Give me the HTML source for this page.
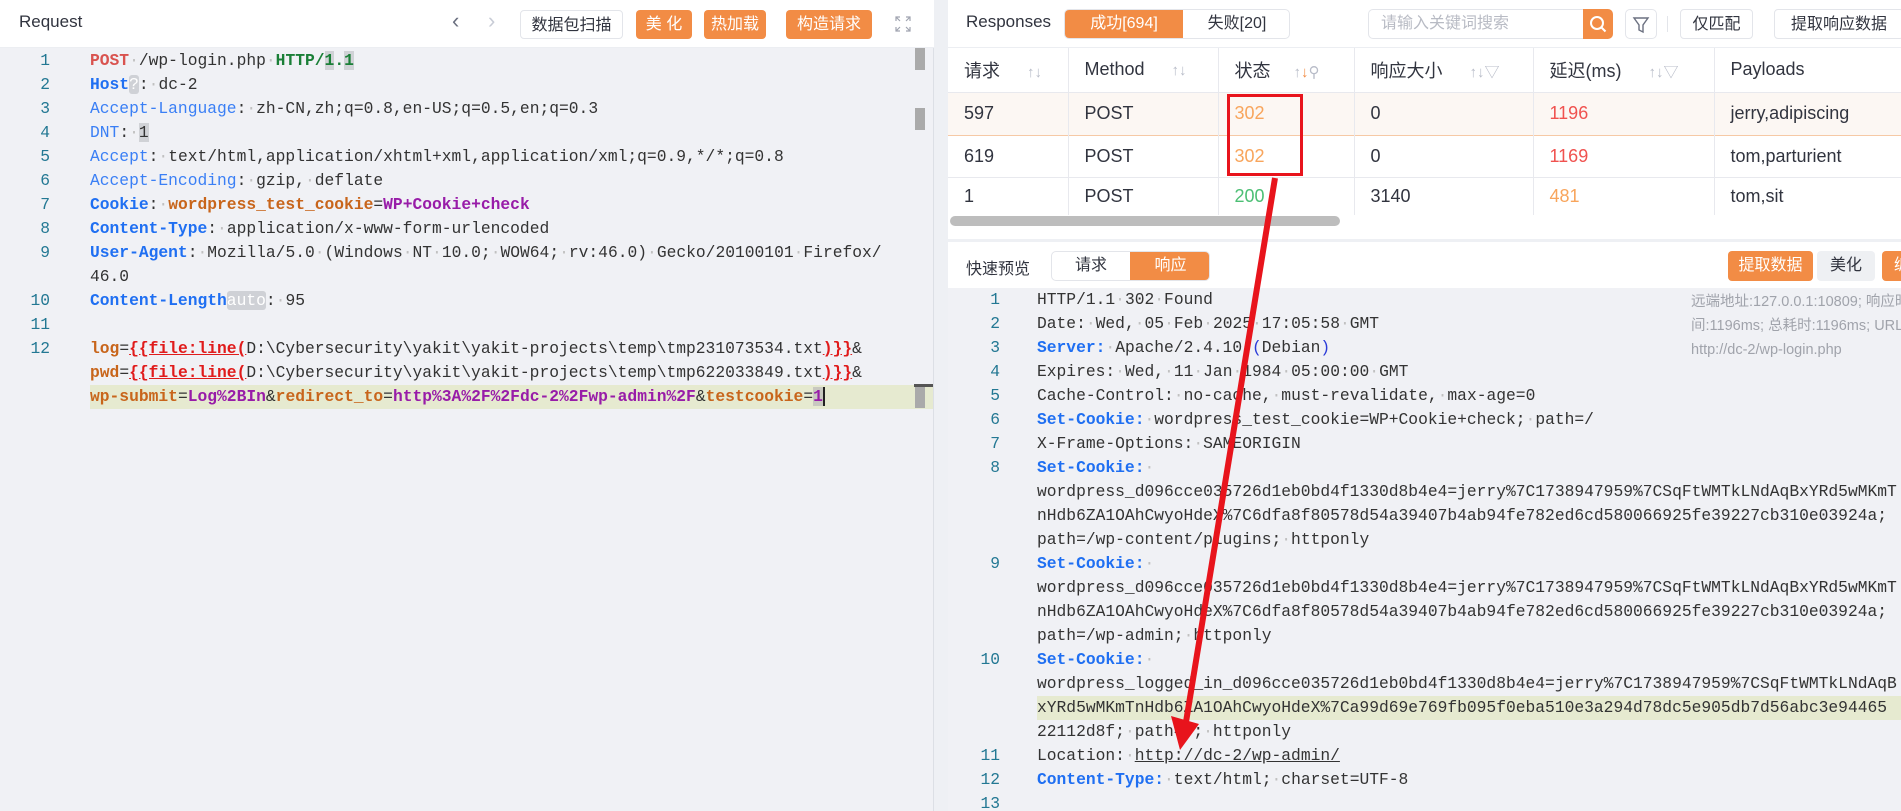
<!DOCTYPE html>
<html><head><meta charset="utf-8"><style>
*{box-sizing:border-box;margin:0;padding:0}
body{width:1901px;height:811px;overflow:hidden;background:#eef0f4;font-family:"Liberation Sans","Noto Sans CJK SC",sans-serif;color:#31343f;position:relative}
.abs{position:absolute}
.btn{position:absolute;height:29px;border-radius:4px;font-size:16px;line-height:29px;text-align:center}
.or{background:#f28c45;color:#fff}
.wb{background:#fff;border:1px solid #e3e5ea;color:#31343f}
.code{font-family:"Liberation Mono","Noto Sans CJK SC",monospace;font-size:16.3px;color:#333}
.code span,.code b{white-space:pre}
.row{height:24px;line-height:24px;position:relative;overflow:visible}
.ln{position:absolute;text-align:right;color:#237893}
.d{color:#c0c0c0}
.kb{color:#1f6ff2;font-weight:bold}
.k{color:#3a7ff5}
.ck{color:#c8651b}
.cv{color:#981ca8}
.rd{color:#e01b1b}
.u{text-decoration:underline;text-decoration-color:#e01b1b}
table{border-collapse:collapse}
th,td{border-right:1px solid #e8e9ee;text-align:left;padding-left:16px;font-size:18px;font-weight:normal}
.sort{color:#b8bcc8;font-size:15px}
</style></head><body>

<div class="abs" style="left:0;top:0;width:934px;height:811px;background:#f0f1f5"></div>
<div class="abs" style="left:0;top:0;width:934px;height:48px;background:#fff;border-bottom:1px solid #eceef2"></div>
<div class="abs" style="left:19px;top:12px;font-size:17px;color:#31343f">Request</div>
<div class="abs" style="left:452px;top:8px;font-size:22px;color:#6b7080">&#8249;</div>
<div class="abs" style="left:488px;top:8px;font-size:22px;color:#c8ccd6">&#8250;</div>
<div class="btn wb" style="left:520px;top:10px;width:103px">数据包扫描</div>
<div class="btn or" style="left:636px;top:10px;width:56px">美 化</div>
<div class="btn or" style="left:704px;top:10px;width:62px">热加载</div>
<div class="btn or" style="left:786px;top:10px;width:86px">构造请求</div>
<svg class="abs" style="left:895px;top:16px" width="16" height="16" viewBox="0 0 16 16" fill="none" stroke="#a0a4b0" stroke-width="1.2"><path d="M1 5V1h4M1 1l4 4M15 5V1h-4M15 1l-4 4M1 11v4h4M1 15l4-4M15 11v4h-4M15 15l-4-4"/></svg>

<div class="abs" style="left:90px;top:385px;width:844px;height:24px;background:#e6ead0"></div>
<div class="abs" style="left:915px;top:48px;width:10px;height:22px;background:#aaa"></div>
<div class="abs" style="left:915px;top:108px;width:10px;height:22px;background:#aaa"></div>
<div class="abs" style="left:915px;top:385px;width:10px;height:23px;background:#aaa"></div>
<div class="abs" style="left:914px;top:384px;width:20px;height:3px;background:#555"></div>
<div class="abs" style="left:933px;top:48px;width:1px;height:763px;background:#dcdfe5"></div>

<div class="abs code" style="left:0;top:49px;width:934px">
<div class="row"><span class="ln" style="left:0;width:50px">1</span><span style="position:absolute;left:90px"><b style="color:#d9534f">POST</b><span class="d">·</span>/wp-login.php<span class="d">·</span><b style="color:#1a7f37">HTTP/<span style="background:#d0d2d6">1</span>.<span style="background:#d0d2d6">1</span></b></span></div>
<div class="row"><span class="ln" style="left:0;width:50px">2</span><span style="position:absolute;left:90px"><span class="kb">Host</span><span style="background:#cfd1d6;color:#fff;border-radius:3px">?</span>:<span class="d">·</span>dc-2</span></div>
<div class="row"><span class="ln" style="left:0;width:50px">3</span><span style="position:absolute;left:90px"><span class="k">Accept-Language</span>:<span class="d">·</span>zh-CN,zh;q=0.8,en-US;q=0.5,en;q=0.3</span></div>
<div class="row"><span class="ln" style="left:0;width:50px">4</span><span style="position:absolute;left:90px"><span class="k">DNT</span>:<span class="d">·</span><span style="background:#d0d2d6">1</span></span></div>
<div class="row"><span class="ln" style="left:0;width:50px">5</span><span style="position:absolute;left:90px"><span class="k">Accept</span>:<span class="d">·</span>text/html,application/xhtml+xml,application/xml;q=0.9,*/*;q=0.8</span></div>
<div class="row"><span class="ln" style="left:0;width:50px">6</span><span style="position:absolute;left:90px"><span class="k">Accept-Encoding</span>:<span class="d">·</span>gzip,<span class="d">·</span>deflate</span></div>
<div class="row"><span class="ln" style="left:0;width:50px">7</span><span style="position:absolute;left:90px"><span class="kb">Cookie</span>:<span class="d">·</span><b class="ck">wordpress_test_cookie</b>=<b class="cv">WP+Cookie+check</b></span></div>
<div class="row"><span class="ln" style="left:0;width:50px">8</span><span style="position:absolute;left:90px"><span class="kb">Content-Type</span>:<span class="d">·</span>application/x-www-form-urlencoded</span></div>
<div class="row"><span class="ln" style="left:0;width:50px">9</span><span style="position:absolute;left:90px"><span class="kb">User-Agent</span>:<span class="d">·</span>Mozilla/5.0<span class="d">·</span>(Windows<span class="d">·</span>NT<span class="d">·</span>10.0;<span class="d">·</span>WOW64;<span class="d">·</span>rv:46.0)<span class="d">·</span>Gecko/20100101<span class="d">·</span>Firefox/</span></div>
<div class="row"><span style="position:absolute;left:90px">46.0</span></div>
<div class="row"><span class="ln" style="left:0;width:50px">10</span><span style="position:absolute;left:90px"><span class="kb">Content-Length</span><span style="background:#cfd1d6;color:#fff;border-radius:3px">auto</span>:<span class="d">·</span>95</span></div>
<div class="row"><span class="ln" style="left:0;width:50px">11</span></div>
<div class="row"><span class="ln" style="left:0;width:50px">12</span><span style="position:absolute;left:90px"><b class="ck">log</b>=<b class="rd u">{{file:line(</b>D:\Cybersecurity\yakit\yakit-projects\temp\tmp231073534.txt<b class="rd u">)}}</b>&amp;</span></div>
<div class="row"><span style="position:absolute;left:90px"><b class="ck">pwd</b>=<b class="rd u">{{file:line(</b>D:\Cybersecurity\yakit\yakit-projects\temp\tmp622033849.txt<b class="rd u">)}}</b>&amp;</span></div>
<div class="row"><span style="position:absolute;left:90px"><b class="ck">wp-submit</b>=<b class="cv">Log%2BIn</b>&amp;<b class="ck">redirect_to</b>=<b class="cv">http%3A%2F%2Fdc-2%2Fwp-admin%2F</b>&amp;<b class="ck">testcookie</b>=<b class="cv" style="background:#c8c8c0">1</b><span style="border-left:2px solid #222"></span></span></div>
</div>

<div class="abs" style="left:948px;top:0;width:953px;height:239px;background:#fff"></div>
<div class="abs" style="left:948px;top:0;width:953px;height:48px;border-bottom:1px solid #eceef2"></div>
<div class="abs" style="left:966px;top:12px;font-size:17px">Responses</div>
<div class="abs" style="left:1064px;top:9px;width:226px;height:30px;border:1px solid #e3e5ea;border-radius:5px;overflow:hidden;font-size:16px;line-height:28px">
<div class="abs or" style="left:0;top:0;width:118px;height:30px;text-align:center">成功[694]</div>
<div class="abs" style="left:118px;top:0;width:108px;text-align:center">失败[20]</div></div>
<div class="abs" style="left:1368px;top:9px;width:216px;height:30px;border:1px solid #e3e5ea;border-right:none;border-radius:5px 0 0 5px;font-size:16px;line-height:28px;color:#b8bbc4;padding-left:12px">请输入关键词搜索</div>
<div class="abs or" style="left:1583px;top:9px;width:30px;height:30px;border-radius:0 5px 5px 0"><svg width="30" height="30"><circle cx="14" cy="14" r="6" fill="none" stroke="#fff" stroke-width="2"/><path d="M18.5 18.5l4 4" stroke="#fff" stroke-width="2"/></svg></div>
<div class="abs" style="left:1625px;top:9px;width:32px;height:30px;border:1px solid #e3e5ea;border-radius:5px"><svg width="30" height="28"><path d="M8 8h14l-5 7v7l-4-2v-5z" fill="none" stroke="#6b7080" stroke-width="1.4"/></svg></div>
<div class="abs" style="left:1667px;top:16px;width:1px;height:16px;background:#e3e5ea"></div>
<div class="btn wb" style="left:1680px;top:9px;width:73px;height:30px">仅匹配</div>
<div class="btn wb" style="left:1774px;top:9px;width:130px;height:30px">提取响应数据</div>

<table class="abs" style="left:948px;top:48px;width:970px">
<tr style="height:44px;background:#fff;border-bottom:1px solid #e8e9ee">
<th style="width:120px">请求 <span class="sort" style="margin-left:22px">↑↓</span></th>
<th style="width:150px">Method <span class="sort" style="margin-left:22px">↑↓</span></th>
<th style="width:136px">状态 <span class="sort" style="margin-left:18px">↑<span style="color:#f28c45">↓</span>&#9906;</span></th>
<th style="width:179px">响应大小 <span class="sort" style="margin-left:22px">↑↓▽</span></th>
<th style="width:181px">延迟(ms) <span class="sort" style="margin-left:22px">↑↓▽</span></th>
<th>Payloads</th></tr>
<tr style="height:43px;background:#fcf7f3;border-top:1px solid #f6c9a5;border-bottom:1px solid #f6c9a5"><td>597</td><td>POST</td><td style="color:#f8a55c">302</td><td>0</td><td style="color:#f0524f">1196</td><td>jerry,adipiscing</td></tr>
<tr style="height:42px;border-bottom:1px solid #e8e9ee"><td>619</td><td>POST</td><td style="color:#f8a55c">302</td><td>0</td><td style="color:#f0524f">1169</td><td>tom,parturient</td></tr>
<tr style="height:38px"><td>1</td><td>POST</td><td style="color:#4cbf74">200</td><td>3140</td><td style="color:#f8a55c">481</td><td>tom,sit</td></tr>
</table>
<div class="abs" style="left:950px;top:216px;width:390px;height:10px;border-radius:5px;background:#bdbdbd"></div>
<div class="abs" style="left:1227px;top:94px;width:76px;height:82px;border:3px solid #e8141c"></div>

<div class="abs" style="left:948px;top:242px;width:953px;height:46px;background:#fff"></div>
<div class="abs" style="left:966px;top:255px;font-size:16px;color:#31343f">快速预览</div>
<div class="abs" style="left:1051px;top:251px;width:159px;height:30px;border:1px solid #e3e5ea;border-radius:5px;overflow:hidden;font-size:16px;line-height:28px">
<div class="abs" style="left:0;top:0;width:78px;text-align:center">请求</div>
<div class="abs or" style="left:78px;top:0;width:81px;height:30px;text-align:center">响应</div></div>
<div class="btn or" style="left:1728px;top:251px;width:85px;height:30px">提取数据</div>
<div class="btn" style="left:1817px;top:251px;width:58px;height:30px;background:#eef0f3">美化</div>
<div class="btn or" style="left:1882px;top:251px;width:40px;height:30px">编</div>

<div class="abs" style="left:948px;top:288px;width:953px;height:523px;background:#f0f1f5"></div>
<div class="abs" style="left:1037px;top:696px;width:864px;height:24px;background:#e6ead0"></div>
<div class="abs" style="left:1691px;top:290px;width:220px;font-size:14.5px;line-height:24px;color:#a0a3ab;white-space:nowrap">远端地址:127.0.0.1:10809; 响应时<br>间:1196ms; 总耗时:1196ms; URL:<br>http://dc-2/wp-login.php</div>

<div class="abs code" style="left:948px;top:288px;width:953px;overflow:hidden;height:523px">
<div class="row"><span class="ln" style="left:0;width:52px">1</span><span style="position:absolute;left:89px">HTTP/1.1<span class="d">·</span>302<span class="d">·</span>Found</span></div>
<div class="row"><span class="ln" style="left:0;width:52px">2</span><span style="position:absolute;left:89px">Date:<span class="d">·</span>Wed,<span class="d">·</span>05<span class="d">·</span>Feb<span class="d">·</span>2025<span class="d">·</span>17:05:58<span class="d">·</span>GMT</span></div>
<div class="row"><span class="ln" style="left:0;width:52px">3</span><span style="position:absolute;left:89px"><span class="kb">Server:</span><span class="d">·</span>Apache/2.4.10<span class="d">·</span><span style="color:#2a3bd8">(</span>Debian<span style="color:#2a3bd8">)</span></span></div>
<div class="row"><span class="ln" style="left:0;width:52px">4</span><span style="position:absolute;left:89px">Expires:<span class="d">·</span>Wed,<span class="d">·</span>11<span class="d">·</span>Jan<span class="d">·</span>1984<span class="d">·</span>05:00:00<span class="d">·</span>GMT</span></div>
<div class="row"><span class="ln" style="left:0;width:52px">5</span><span style="position:absolute;left:89px">Cache-Control:<span class="d">·</span>no-cache,<span class="d">·</span>must-revalidate,<span class="d">·</span>max-age=0</span></div>
<div class="row"><span class="ln" style="left:0;width:52px">6</span><span style="position:absolute;left:89px"><span class="kb">Set-Cookie:</span><span class="d">·</span>wordpress_test_cookie=WP+Cookie+check;<span class="d">·</span>path=/</span></div>
<div class="row"><span class="ln" style="left:0;width:52px">7</span><span style="position:absolute;left:89px">X-Frame-Options:<span class="d">·</span>SAMEORIGIN</span></div>
<div class="row"><span class="ln" style="left:0;width:52px">8</span><span style="position:absolute;left:89px"><span class="kb">Set-Cookie:</span><span class="d">·</span></span></div>
<div class="row"><span style="position:absolute;left:89px">wordpress_d096cce035726d1eb0bd4f1330d8b4e4=jerry%7C1738947959%7CSqFtWMTkLNdAqBxYRd5wMKmT</span></div>
<div class="row"><span style="position:absolute;left:89px">nHdb6ZA1OAhCwyoHdeX%7C6dfa8f80578d54a39407b4ab94fe782ed6cd580066925fe39227cb310e03924a;</span></div>
<div class="row"><span style="position:absolute;left:89px">path=/wp-content/plugins;<span class="d">·</span>httponly</span></div>
<div class="row"><span class="ln" style="left:0;width:52px">9</span><span style="position:absolute;left:89px"><span class="kb">Set-Cookie:</span><span class="d">·</span></span></div>
<div class="row"><span style="position:absolute;left:89px">wordpress_d096cce035726d1eb0bd4f1330d8b4e4=jerry%7C1738947959%7CSqFtWMTkLNdAqBxYRd5wMKmT</span></div>
<div class="row"><span style="position:absolute;left:89px">nHdb6ZA1OAhCwyoHdeX%7C6dfa8f80578d54a39407b4ab94fe782ed6cd580066925fe39227cb310e03924a;</span></div>
<div class="row"><span style="position:absolute;left:89px">path=/wp-admin;<span class="d">·</span>httponly</span></div>
<div class="row"><span class="ln" style="left:0;width:52px">10</span><span style="position:absolute;left:89px"><span class="kb">Set-Cookie:</span><span class="d">·</span></span></div>
<div class="row"><span style="position:absolute;left:89px">wordpress_logged_in_d096cce035726d1eb0bd4f1330d8b4e4=jerry%7C1738947959%7CSqFtWMTkLNdAqB</span></div>
<div class="row"><span style="position:absolute;left:89px">xYRd5wMKmTnHdb6ZA1OAhCwyoHdeX%7Ca99d69e769fb095f0eba510e3a294d78dc5e905db7d56abc3e94465</span></div>
<div class="row"><span style="position:absolute;left:89px">22112d8f;<span class="d">·</span>path=/;<span class="d">·</span>httponly</span></div>
<div class="row"><span class="ln" style="left:0;width:52px">11</span><span style="position:absolute;left:89px">Location:<span class="d">·</span><span style="text-decoration:underline">http://dc-2/wp-admin/</span></span></div>
<div class="row"><span class="ln" style="left:0;width:52px">12</span><span style="position:absolute;left:89px"><span class="kb">Content-Type:</span><span class="d">·</span>text/html;<span class="d">·</span>charset=UTF-8</span></div>
<div class="row"><span class="ln" style="left:0;width:52px">13</span></div>
</div>

<svg class="abs" style="left:0;top:0" width="1901" height="811"><line x1="1275" y1="178" x2="1186" y2="722" stroke="#e8141c" stroke-width="6"/><polygon points="1171,716 1199,724 1180,750" fill="#e8141c"/></svg>
</body></html>
